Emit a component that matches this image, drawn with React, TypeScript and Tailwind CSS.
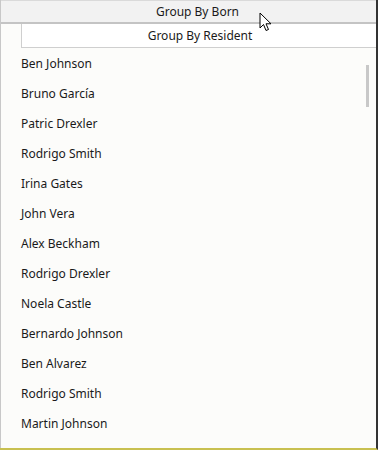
import React from "react";

const names = [
  "Ben Johnson",
  "Bruno García",
  "Patric Drexler",
  "Rodrigo Smith",
  "Irina Gates",
  "John Vera",
  "Alex Beckham",
  "Rodrigo Drexler",
  "Noela Castle",
  "Bernardo Johnson",
  "Ben Alvarez",
  "Rodrigo Smith",
  "Martin Johnson",
];

export default function App() {
  return (
    <div
      className="relative w-[378px] h-[450px] overflow-hidden bg-[#fcfcfa] border-r-2 border-r-[#333333] border-b-2 border-b-[#c8c050] text-[#1a1a1a]"
      style={{ fontFamily: '"Noto Sans", "Open Sans", sans-serif' }}
    >
      <div className="flex flex-col h-full border-l border-l-[#c8c8c8]">
        <div className="h-[24px] shrink-0 flex items-center justify-center pl-[18px] bg-[#f2f2f2] border-t border-t-[#dadada] border-b-2 border-b-[#c4c4c4] text-[12px] leading-none">
          Group By Born
        </div>
        <div className="flex shrink-0">
          <div className="w-[20px]" />
          <div className="flex-1 h-[24px] flex items-center justify-center pl-[2px] bg-white border-l border-l-[#cfcfcf] border-b border-b-[#cfcfcf] text-[12px] leading-none">
            Group By Resident
          </div>
        </div>
        <div className="flex-1 flex overflow-hidden">
          <div className="flex-1 flex flex-col pt-[1px]">
            {names.map((n, i) => (
              <div
                key={i}
                className="h-[30px] shrink-0 flex items-center pl-[20px] text-[12px] leading-none"
              >
                {n}
              </div>
            ))}
          </div>
          <div className="w-[10px] shrink-0 pt-[17px]">
            <div className="w-[3px] h-[42px] bg-[#c8c8c8]" />
          </div>
        </div>
      </div>
      <svg
        className="absolute left-[259px] top-[12px]"
        width="16"
        height="22"
        viewBox="0 0 16 22"
      >
        <path
          d="M1 1 L1 16 L4.5 12.5 L7 18.5 L9.5 17.5 L7 11.8 L12 11.8 Z"
          fill="white"
          stroke="black"
          strokeWidth="1"
          strokeLinejoin="round"
        />
      </svg>
    </div>
  );
}
